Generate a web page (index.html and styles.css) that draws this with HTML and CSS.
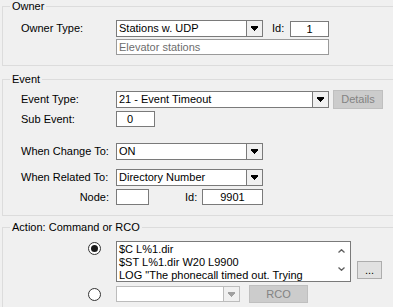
FILE: index.html
```html
<!DOCTYPE html>
<html lang="en">
<head>
  <meta charset="UTF-8" />
  <title>Event Action</title>
  <link rel="stylesheet" href="styles.css">
</head>
<body>

  <!-- Owner -->
  <fieldset class="group group-owner">
    <legend>Owner</legend>
    <div class="row row-owner">
      <span class="label">Owner Type:</span>
      <div class="combo combo-owner">
        <span class="combo-text">Stations w. UDP</span>
        <span class="combo-btn"><svg width="7" height="5" viewBox="0 0 7 5" shape-rendering="crispEdges"><path d="M0 0H7V2H6V3H5V4H4V5H3V4H2V3H1V2H0Z" fill="#000"/></svg></span>
      </div>
      <span class="id-label">Id:</span>
      <div class="edit edit-owner-id">1</div>
    </div>
    <div class="row row-desc">
      <span class="label"></span>
      <div class="edit edit-desc">Elevator stations</div>
    </div>
  </fieldset>

  <!-- Event -->
  <fieldset class="group group-event">
    <legend>Event</legend>
    <div class="row row-type">
      <span class="label">Event Type:</span>
      <div class="combo combo-type">
        <span class="combo-text">21 - Event Timeout</span>
        <span class="combo-btn"><svg width="7" height="5" viewBox="0 0 7 5" shape-rendering="crispEdges"><path d="M0 0H7V2H6V3H5V4H4V5H3V4H2V3H1V2H0Z" fill="#000"/></svg></span>
      </div>
      <button class="btn btn-details" disabled>Details</button>
    </div>
    <div class="row row-sub">
      <span class="label">Sub Event:</span>
      <div class="edit edit-sub">0</div>
    </div>
    <div class="row row-change">
      <span class="label">When Change To:</span>
      <div class="combo combo-mid">
        <span class="combo-text">ON</span>
        <span class="combo-btn"><svg width="7" height="5" viewBox="0 0 7 5" shape-rendering="crispEdges"><path d="M0 0H7V2H6V3H5V4H4V5H3V4H2V3H1V2H0Z" fill="#000"/></svg></span>
      </div>
    </div>
    <div class="row row-related">
      <span class="label">When Related To:</span>
      <div class="combo combo-mid">
        <span class="combo-text">Directory Number</span>
        <span class="combo-btn"><svg width="7" height="5" viewBox="0 0 7 5" shape-rendering="crispEdges"><path d="M0 0H7V2H6V3H5V4H4V5H3V4H2V3H1V2H0Z" fill="#000"/></svg></span>
      </div>
    </div>
    <div class="row row-node">
      <span class="label label-right">Node:</span>
      <div class="edit edit-node"></div>
      <span class="id-label id-label-node">Id:</span>
      <div class="edit edit-node-id">9901</div>
    </div>
  </fieldset>

  <!-- Action -->
  <fieldset class="group group-action">
    <legend>Action: Command or RCO</legend>
    <div class="row row-memo">
      <span class="label radio-cell"><span class="radio checked"></span></span>
      <div class="memo">
        <div class="memo-text">
          <div class="memo-line">$C L%1.dir</div>
          <div class="memo-line">$ST L%1.dir W20 L9900</div>
          <div class="memo-line">LOG "The phonecall timed out. Trying</div>
        </div>
        <div class="memo-scroll">
          <svg class="chev-up" width="7" height="4" viewBox="0 0 7 4"><polyline points="0.5,3.5 3.5,0.7 6.5,3.5" fill="none" stroke="#606060" stroke-width="1.3"/></svg>
          <svg class="chev-down" width="7" height="4" viewBox="0 0 7 4"><polyline points="0.5,0.5 3.5,3.3 6.5,0.5" fill="none" stroke="#606060" stroke-width="1.3"/></svg>
        </div>
      </div>
      <button class="btn btn-more">...</button>
    </div>
    <div class="row row-rco">
      <span class="label radio-cell"><span class="radio"></span></span>
      <div class="combo combo-rco">
        <span class="combo-text"></span>
        <span class="combo-btn combo-btn-off"><svg width="7" height="5" viewBox="0 0 7 5" shape-rendering="crispEdges"><path d="M0 0H7V2H6V3H5V4H4V5H3V4H2V3H1V2H0Z" fill="#a0a0a0"/></svg></span>
      </div>
      <button class="btn btn-rco" disabled>RCO</button>
    </div>
  </fieldset>

</body>
</html>
```

FILE: styles.css
```css
* {
  box-sizing: border-box;
}

html, body {
  overflow: hidden;
}

body {
  margin: 0;
  width: 393px;
  height: 307px;
  background-color: #f0f0f0;
  color: #000;
  font-family: "Liberation Sans", Arial, sans-serif;
  font-size: 11px;
  line-height: 13px;
}

/* group boxes - the right edge lies outside the window */
.group {
  width: 391px;
  min-width: 0;
  margin: 0 0 0 2px;
  padding: 0 0 10px;
  border: 1px solid #dcdcdc;
  border-right: none;
}

.group legend {
  margin-left: 7px;
  padding: 0 2px;
  line-height: 13px;
}

.group-event {
  margin-top: 7px;
}

.group-action {
  margin-top: 5px;
}

/* rows */
.row {
  display: flex;
  align-items: center;
  padding-left: 18px;
}

.label {
  flex: none;
  width: 95px;
  white-space: nowrap;
}

.label-right {
  text-align: right;
  padding-right: 7px;
}

.row-owner   { margin-top: 7px; }
.row-desc    { margin-top: 2px; }
.row-type    { margin-top: 4px; height: 19px; }
.row-sub     { margin-top: 2px; }
.row-change  { margin-top: 16px; }
.row-related { margin-top: 9px; }
.row-node    { margin-top: 3px; }
.row-memo    { margin-top: 7px; align-items: flex-start; }
.row-rco     { margin-top: 3px; height: 18px; }

/* combo boxes */
.combo {
  flex: none;
  display: flex;
  height: 17px;
  border: 1px solid #7a7a7a;
  background: #fff;
}

.combo-text {
  flex: 1;
  padding-left: 2px;
  line-height: 15px;
  white-space: nowrap;
  overflow: hidden;
}

.combo-btn {
  flex: none;
  width: 16px;
  display: flex;
  align-items: center;
  justify-content: center;
  border-left: 1px solid #7a7a7a;
  background: #f0f0f0;
}

.combo-btn-off {
  border-left-color: #bcbcbc;
}

.combo-owner { width: 147px; }
.combo-type  { width: 213px; }
.combo-mid   { width: 147px; }
.combo-rco   { width: 124px; height: 16px; border-color: #bcbcbc; }

/* edit boxes */
.edit {
  flex: none;
  height: 16px;
  border: 1px solid #7a7a7a;
  background: #fff;
  padding: 0 2px;
  line-height: 14px;
  white-space: nowrap;
}

.edit-owner-id { width: 39px; text-align: center; }
.edit-desc     { width: 213px; color: #6d6d6d; border-color: #9a9a9a; }
.edit-sub      { width: 39px; padding-left: 10px; }
.edit-node     { width: 33px; }
.edit-node-id  { width: 61px; text-align: center; }

.id-label {
  flex: none;
  width: 18px;
  margin-left: 9px;
}

.id-label-node {
  width: 17px;
  margin-left: 36px;
}

/* buttons */
.btn {
  flex: none;
  margin: 0;
  padding: 0;
  font: inherit;
  color: #000;
  background: #e1e1e1;
  border: 1px solid #adadad;
  text-align: center;
}

.btn:disabled {
  background: #cccccc;
  border-color: #bfbfbf;
  color: #838383;
}

.btn-details {
  width: 50px;
  height: 19px;
  margin-left: 4px;
}

.btn-more {
  width: 25px;
  height: 18px;
  margin-left: 6px;
  margin-top: 20px;
  line-height: 12px;
}

.btn-rco {
  width: 59px;
  height: 18px;
  margin-left: 9px;
}

/* radio buttons */
.radio-cell {
  display: flex;
  padding-left: 67px;
}

.row-memo .radio-cell {
  padding-top: 1px;
}

.radio {
  width: 13px;
  height: 13px;
  border: 1px solid #333;
  border-radius: 50%;
  background: #fff;
  display: flex;
  align-items: center;
  justify-content: center;
}

.radio.checked::after {
  content: "";
  width: 7px;
  height: 7px;
  border-radius: 50%;
  background: #1a1a1a;
}

/* memo */
.memo {
  flex: none;
  display: flex;
  width: 235px;
  height: 41px;
  border: 1px solid #7a7a7a;
  background: #fff;
}

.memo-text {
  flex: 1;
  padding: 1px 0 0 2px;
  overflow: hidden;
}

.memo-line {
  height: 13px;
  white-space: nowrap;
}

.memo-scroll {
  flex: none;
  width: 17px;
  display: flex;
  flex-direction: column;
  align-items: center;
  padding-top: 7px;
}

.chev-down {
  margin-top: 14px;
}
```
